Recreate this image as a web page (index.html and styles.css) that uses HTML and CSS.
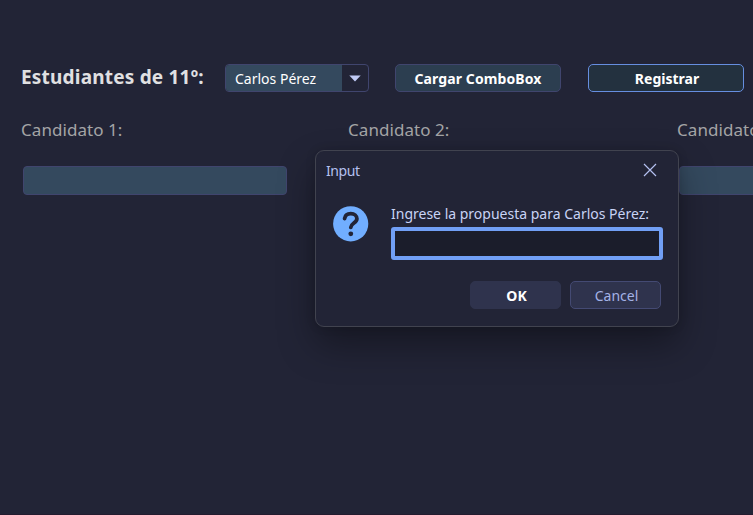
FILE: index.html
```html
<!DOCTYPE html>
<html lang="es">
<head>
<meta charset="utf-8">
<title>Candidatos</title>
<link rel="stylesheet" href="styles.css">
</head>
<body>
<main class="app">
  <div class="toolbar">
    <span class="heading">Estudiantes de 11º:</span>
    <div class="combo">
      <span class="combo-value">Carlos Pérez</span>
      <span class="combo-arrow"><svg width="12" height="7" viewBox="0 0 12 7"><path d="M0.3 0.5H11.7L6 6.6Z" fill="#c0caf5"/></svg></span>
    </div>
    <button class="btn load">Cargar ComboBox</button>
    <button class="btn register">Registrar</button>
  </div>
  <div class="candidates">
    <div class="candidate"><span class="label">Candidato 1:</span><div class="field"></div></div>
    <div class="candidate"><span class="label">Candidato 2:</span><div class="field"></div></div>
    <div class="candidate"><span class="label">Candidato 3:</span><div class="field"></div></div>
  </div>
</main>
<section class="dialog" role="dialog">
  <header class="titlebar">
    <span class="title">Input</span>
    <svg class="close" width="14" height="14" viewBox="0 0 14 14"><path d="M1 1L13 13M13 1L1 13" stroke="#b4c0f0" stroke-width="1.2" fill="none"/></svg>
  </header>
  <div class="body">
    <svg class="question" width="36" height="36" viewBox="0 0 36 36"><circle cx="17.7" cy="17.8" r="17.6" fill="#71aeff"/><path d="M11.6 12.6C12 9.5 14.5 7.6 17.8 7.6C21.4 7.6 23.9 9.8 23.9 12.8C23.9 16.9 18.1 17.2 17.8 21.4" fill="none" stroke="#222436" stroke-width="3.8" stroke-linecap="round"/><circle cx="17.8" cy="27.8" r="2.4" fill="#222436"/></svg>
    <div class="prompt">
      <span class="question-text">Ingrese la propuesta para Carlos Pérez:</span>
      <div class="entry"></div>
    </div>
  </div>
  <footer class="actions">
    <button class="btn ok">OK</button>
    <button class="btn cancel">Cancel</button>
  </footer>
</section>
</body>
</html>
```
FILE: styles.css
```css
* { box-sizing: border-box; }
body {
  margin: 0;
  width: 753px;
  height: 515px;
  overflow: hidden;
  position: relative;
  background: #222436;
  font-family: "Noto Sans", "Open Sans", sans-serif;
  color: #fff;
  white-space: nowrap;
}
.app {
  height: 515px;
  padding-top: 64px;
  border-bottom: 1px solid #241b2f;
  overflow: hidden;
}
.toolbar { display: flex; height: 28px; align-items: center; padding-left: 21px; }
.heading { width: 204px; font-size: 19px; letter-spacing: 0.2px; font-weight: 700; color: #e0e0e2; line-height: 26px; padding-bottom: 2px; }
.combo {
  display: flex;
  width: 144px;
  height: 28px;
  margin-right: 26px;
  border: 1px solid #40456e;
  border-radius: 4px;
  overflow: hidden;
}
.combo-value { width: 116px; padding-left: 9px; background: #34495e; font-size: 14px; line-height: 27px; }
.combo-arrow { flex: 1; display: flex; align-items: center; justify-content: center; }
.btn {
  height: 28px;
  padding: 2px 0 0;
  border: 1px solid #40456e;
  border-radius: 5px;
  font: 700 14px/24px "Noto Sans", "Open Sans", sans-serif;
  color: #fff;
  text-align: center;
}
.load { width: 166px; margin-right: 27px; background: #2c3e50; letter-spacing: 0.1px; }
.register { width: 156px; padding-left: 2px; background: #23313f; border-color: #668ee0; }
.candidates { display: grid; grid-template-columns: 327px 329px 327px; width: 983px; padding: 24px 0 0 21px; }
.candidate { display: flex; flex-direction: column; gap: 22px; }
.label { height: 28px; font-size: 17px; letter-spacing: 0.05px; line-height: 28px; color: #a4a4a6; }
.field { width: 264px; height: 29px; margin-left: 2px; background: #34495e; border: 1px solid #40456e; border-radius: 4px; }
.dialog {
  position: absolute;
  left: 315px;
  top: 150px;
  width: 364px;
  height: 177px;
  background: #222436;
  border: 1px solid #41434f;
  border-radius: 9px;
  box-shadow: 0 18px 36px rgba(0, 0, 0, 0.35), 0 0 10px rgba(0, 0, 0, 0.15);
}
.titlebar { display: flex; justify-content: space-between; align-items: center; height: 39px; padding: 0 21px 0 10px; }
.title { font-size: 14px; letter-spacing: -0.4px; color: #b4c0f0; line-height: 39px; }
.close { margin-bottom: 2px; }
.body { display: flex; gap: 22px; padding: 13px 15px 0 17px; height: 70px; }
.question { margin-top: 3px; flex: none; }
.prompt { display: flex; flex-direction: column; flex: 1; }
.question-text { height: 24px; font-size: 14px; line-height: 21px; color: #c8d3f5; }
.entry { flex: none; height: 33px; background: #1b1d2b; border: 4px solid #719ff5; border-radius: 3px; }
.actions { display: flex; justify-content: flex-end; gap: 9px; padding: 21px 17px 0 0; }
.ok, .cancel { width: 91px; padding-left: 2px; background: #2f334d; }
.ok { border-color: #2f334d; }
.cancel { font-weight: 400; color: #a4b2e6; border-color: #444a73; }
```
